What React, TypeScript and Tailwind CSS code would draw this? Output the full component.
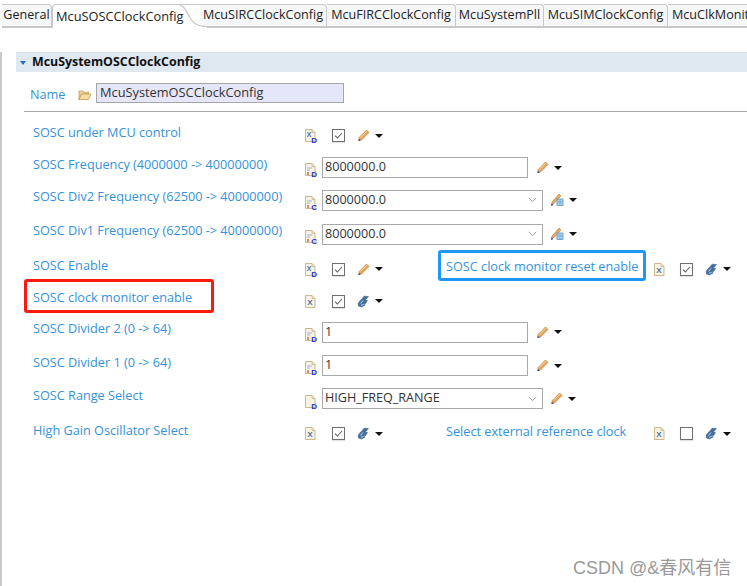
import React from "react";

const font = { fontFamily: '"Open Sans","Noto Sans","Noto Sans CJK SC",sans-serif' };

function DocIcon({ letter, sub, bar }: { letter?: string; sub?: string; bar?: boolean }) {
  return (
    <svg width="14" height="15" viewBox="0 0 14 15" className="shrink-0">
      <path d="M1.5 1.5H8L11 4.5V13.5H1.5Z" fill="#f6f3e6" stroke="#c9b98d" strokeWidth="1" />
      <path d="M8 1.5V4.5H11" fill="#e4dcc0" stroke="#c9b98d" strokeWidth="0.8" />
      {bar && <path d="M3 6H8M3 8H6" stroke="#9fb4d6" strokeWidth="1" />}
      {bar && <path d="M3 10H5V13H3Z" fill="#d98b6a" />}
      {letter && (
        <text x={sub ? 5 : 6} y={sub ? 8.5 : 10.5} fontSize={sub ? 7 : 8} fontWeight="700" fill="#54709f" textAnchor="middle" fontFamily="Liberation Sans">
          {letter}
        </text>
      )}
      {sub && (
        <text x="10.2" y="14.5" fontSize="8" fontWeight="700" fill="#1c2fd0" textAnchor="middle" fontFamily="Liberation Sans">
          {sub}
        </text>
      )}
    </svg>
  );
}

function Pencil() {
  return (
    <svg width="13" height="13" viewBox="0 0 13 13" className="shrink-0">
      <path d="M9.5 1 L12 3.5 L4.5 11 L1.8 11.6 L2.2 8.5 Z" fill="#e8a75e" stroke="#b9823f" strokeWidth="0.7" />
      <path d="M1.5 12 L1.9 9.8 L3.6 11.4 Z" fill="#27408f" />
      <path d="M3.2 8.4 L9.8 2.2" stroke="#f6d8a8" strokeWidth="1" />
    </svg>
  );
}

function PencilGrid() {
  return (
    <svg width="14" height="14" viewBox="0 0 14 14" className="shrink-0">
      <path d="M9 1 L11 2.8 L4 10.5 L1.5 12 L2 9 Z" fill="#e8a75e" stroke="#b9823f" strokeWidth="0.6" />
      <path d="M1 13 L1.6 10.6 L3.4 12 Z" fill="#27408f" />
      <rect x="7" y="6" width="6" height="6.5" fill="#a9d0ec" stroke="#5b97c6" strokeWidth="0.8" />
      <path d="M10 6V12.5M7 9H13" stroke="#5b97c6" strokeWidth="0.5" />
    </svg>
  );
}

function Link() {
  return (
    <svg width="13" height="13" viewBox="0 0 13 13" className="shrink-0">
      <path
        d="M7 1.2 L11.5 1.6 L9.2 4.2 L7.2 4.4 L10.5 5.6 L8.6 8.6 L6.2 8.8 L8.2 10 L4.6 12 L1.4 11 L1.2 8.2 L3.2 5.4 L5.4 3.4 Z"
        fill="#44709f"
        stroke="#2e5684"
        strokeWidth="0.5"
      />
      <path d="M3.5 8.5 L6 5.5 M4 10.3 L6.6 9.4" stroke="#cfe0f0" strokeWidth="0.9" />
    </svg>
  );
}

function Caret() {
  return <span className="ml-[5px] h-0 w-0 shrink-0 border-x-[4px] border-t-[4px] border-x-transparent border-t-[#111]" />;
}

function Check({ on = true }: { on?: boolean }) {
  return (
    <span className="flex h-[13px] w-[13px] shrink-0 items-center justify-center border border-[#6f6f6f] bg-white shadow-[0_1px_1px_#e2e2e2]">
      {on && (
        <svg width="11" height="11" viewBox="0 0 11 11">
          <path d="M2 5.6 L4.4 8 L9 3" fill="none" stroke="#666" strokeWidth="1.1" />
        </svg>
      )}
    </span>
  );
}

function TextBox({ value, w }: { value: string; w: string }) {
  return (
    <span className={`flex h-[21px] ${w} shrink-0 items-center border border-[#a9a9a9] bg-white pl-[2px] text-[12.6px] text-[#333]`}>
      {value}
    </span>
  );
}

function Combo({ value, w }: { value: string; w: string }) {
  return (
    <span className={`flex h-[21px] ${w} shrink-0 items-center justify-between border border-[#a9a9a9] bg-white pl-[2px] pr-[5px] text-[12.6px] text-[#333]`}>
      {value}
      <svg width="9" height="6" viewBox="0 0 9 6">
        <path d="M0.8 1 L4.5 4.6 L8.2 1" fill="none" stroke="#9a9a9a" strokeWidth="1" />
      </svg>
    </span>
  );
}

function Label({ children, className = "" }: { children: React.ReactNode; className?: string }) {
  return <span className={`whitespace-nowrap text-[12.7px] leading-[18px] text-[#3392dc] ${className}`}>{children}</span>;
}

function Row({ h, label, mark, icon, children, right }: {
  h: string;
  label: string;
  mark?: boolean;
  icon: React.ReactNode;
  children: React.ReactNode;
  right?: React.ReactNode;
}) {
  return (
    <div className={`flex ${h} items-center`}>
      <div className="relative w-[304px] shrink-0 -translate-y-[5px] pl-[33px]">
        <Label>{label}</Label>
        {mark && <span className="absolute -top-[5px] left-[24px] h-[34px] w-[190px] rounded-[3px] border-[3px] border-[#fa1a0e]" />}
      </div>
      <div className="flex w-[21px] shrink-0 justify-start">{icon}</div>
      {children}
      {right}
    </div>
  );
}

function CheckTools({ tool }: { tool: React.ReactNode }) {
  return (
    <>
      <span className="ml-[7px]"><Check /></span>
      <span className="ml-[12px] flex items-center">{tool}</span>
      <Caret />
    </>
  );
}

function Tab({ label, w }: { label: string; w: string }) {
  return (
    <div className={`flex h-[24px] ${w} shrink-0 items-center justify-center rounded-tr-[4px] border-b-2 border-r border-t border-[#c8c8c8] bg-[#f5f7f8] text-[12.6px] text-[#222]`}>
      {label}
    </div>
  );
}

export default function App() {
  return (
    <div style={font} className="relative h-[586px] w-[747px] overflow-hidden bg-white">
      <div className="flex h-[28px] items-end overflow-hidden pl-[2px] pt-[4px]">
        <Tab label="General" w="w-[50px]" />
        <div className="relative z-10 flex h-[24px] w-[148px] shrink-0 items-center rounded-tl-[4px] border-l border-t border-[#c8c8c8] bg-white pl-[3px] text-[12.8px] text-[#222]">
          <span className="relative z-10 whitespace-nowrap">McuSOSCClockConfig</span>
          <svg width="31" height="24" viewBox="0 0 31 24" className="absolute -right-[7px] -top-px">
            <path d="M0 0.5 H2 C7 0.5 10 6 13 12 C16 18 20 22.5 31 22.5 V24 H0 Z" fill="#fff" />
            <path d="M0 0.5 H2 C7 0.5 10 6 13 12 C16 18 20 22.5 31 22.5" fill="none" stroke="#c8c8c8" strokeWidth="1.2" />
          </svg>
        </div>
        <Tab label="McuSIRCClockConfig" w="w-[127px]" />
        <Tab label="McuFIRCClockConfig" w="w-[129px]" />
        <Tab label="McuSystemPll" w="w-[88px]" />
        <Tab label="McuSIMClockConfig" w="w-[124px]" />
        <div className="flex h-[24px] w-[90px] shrink-0 items-center border-b-2 border-t border-[#c8c8c8] bg-[#f5f7f8] pl-[4px] text-[12.6px] text-[#222]">
          McuClkMonitor
        </div>
      </div>

      <div className="h-[558px] border-l-2 border-[#c9c9c9]">
        <section className="ml-[14px] mt-[24px] flex h-[20px] items-center gap-[6px] border-t border-[#d3e0ee] bg-[#dfe7f1] pl-[4px]">
          <span className="h-0 w-0 border-x-[3.5px] border-t-[4px] border-x-transparent border-t-[#1f6fc0]" />
          <span className="text-[12.4px] font-bold text-[#111]">McuSystemOSCClockConfig</span>
        </section>

        <div className="mt-[11px] flex h-[20px] items-center">
          <span className="ml-[28px] w-[48px]"><Label>Name</Label></span>
          <svg width="14" height="12" viewBox="0 0 14 12" className="translate-y-[2px]">
            <path d="M1 2H5L6 3.2H10.5V5H3.5L1 10.5Z" fill="#efd49a" stroke="#c49a50" strokeWidth="0.8" />
            <path d="M1 10.5L3.5 5H13L10.5 10.5Z" fill="#f3dca8" stroke="#c49a50" strokeWidth="0.8" />
          </svg>
          <span className="ml-[4px] flex h-[20px] w-[248px] items-center border border-[#a6a6a6] bg-[#e6e6fa] pl-[3px] text-[12.8px] text-[#333]">
            McuSystemOSCClockConfig
          </span>
        </div>

        <div className="ml-[22px] mt-[8px] h-[1px] bg-[#a8a8a8]" />

        <div className="-ml-[2px] mt-[7px]">
          <Row h="h-[33px]" label="SOSC under MCU control" icon={<DocIcon letter="X" sub="D" />}>
            <CheckTools tool={<Pencil />} />
          </Row>
          <Row h="h-[31px]" label="SOSC Frequency (4000000 -> 40000000)" icon={<span className="translate-y-[2px]"><DocIcon bar sub="D" /></span>}>
            <span className="-ml-[3px]"><TextBox value="8000000.0" w="w-[206px]" /></span>
            <span className="ml-[8px]"><Pencil /></span>
            <Caret />
          </Row>
          <Row h="h-[34px]" label="SOSC Div2 Frequency (62500 -> 40000000)" icon={<span className="translate-y-[2px]"><DocIcon bar sub="C" /></span>}>
            <span className="-ml-[3px]"><Combo value="8000000.0" w="w-[221px]" /></span>
            <span className="ml-[7px]"><PencilGrid /></span>
            <Caret />
          </Row>
          <Row h="h-[34px]" label="SOSC Div1 Frequency (62500 -> 40000000)" icon={<span className="translate-y-[2px]"><DocIcon bar sub="C" /></span>}>
            <span className="-ml-[3px]"><Combo value="8000000.0" w="w-[221px]" /></span>
            <span className="ml-[7px]"><PencilGrid /></span>
            <Caret />
          </Row>
          <Row
            h="h-[36px]"
            label="SOSC Enable"
            icon={<DocIcon letter="X" sub="D" />}
            right={
              <>
                <span className="ml-[55px] flex h-[31px] w-[208px] shrink-0 -translate-y-[4px] items-center rounded-[3px] border-[3px] border-[#1e96fa] pl-[5px] pt-[1px]">
                  <Label>SOSC clock monitor reset enable</Label>
                </span>
                <span className="ml-[7px]"><DocIcon letter="X" /></span>
                <span className="ml-[13px]"><Check /></span>
                <span className="ml-[12px] flex"><Link /></span>
                <Caret />
              </>
            }
          >
            <CheckTools tool={<Pencil />} />
          </Row>
          <Row h="h-[28px]" label="SOSC clock monitor enable" mark icon={<DocIcon letter="X" />}>
            <CheckTools tool={<Link />} />
          </Row>
          <Row h="h-[34px]" label="SOSC Divider 2 (0 -> 64)" icon={<span className="translate-y-[2px]"><DocIcon bar sub="D" /></span>}>
            <span className="-ml-[3px]"><TextBox value="1" w="w-[206px]" /></span>
            <span className="ml-[8px]"><Pencil /></span>
            <Caret />
          </Row>
          <Row h="h-[33px]" label="SOSC Divider 1 (0 -> 64)" icon={<span className="translate-y-[2px]"><DocIcon bar sub="D" /></span>}>
            <span className="-ml-[3px]"><TextBox value="1" w="w-[206px]" /></span>
            <span className="ml-[8px]"><Pencil /></span>
            <Caret />
          </Row>
          <Row h="h-[33px]" label="SOSC Range Select" icon={<span className="translate-y-[3px]"><DocIcon sub="D" /></span>}>
            <span className="-ml-[3px]"><Combo value="HIGH_FREQ_RANGE" w="w-[221px]" /></span>
            <span className="ml-[7px]"><Pencil /></span>
            <Caret />
          </Row>
          <Row
            h="h-[37px]"
            label="High Gain Oscillator Select"
            icon={<DocIcon letter="X" />}
            right={
              <>
                <span className="ml-[63px] w-[207px] shrink-0 -translate-y-[4px]"><Label>Select external reference clock</Label></span>
                <DocIcon letter="X" />
                <span className="ml-[13px]"><Check on={false} /></span>
                <span className="ml-[12px] flex"><Link /></span>
                <Caret />
              </>
            }
          >
            <CheckTools tool={<Link />} />
          </Row>
        </div>
      </div>

      <span className="absolute left-[573px] top-[556px] text-[18px] leading-[24px] text-[#999]" style={{ fontFamily: '"Liberation Sans","Noto Sans CJK SC",sans-serif' }}>
        CSDN @&amp;春风有信
      </span>
    </div>
  );
}
